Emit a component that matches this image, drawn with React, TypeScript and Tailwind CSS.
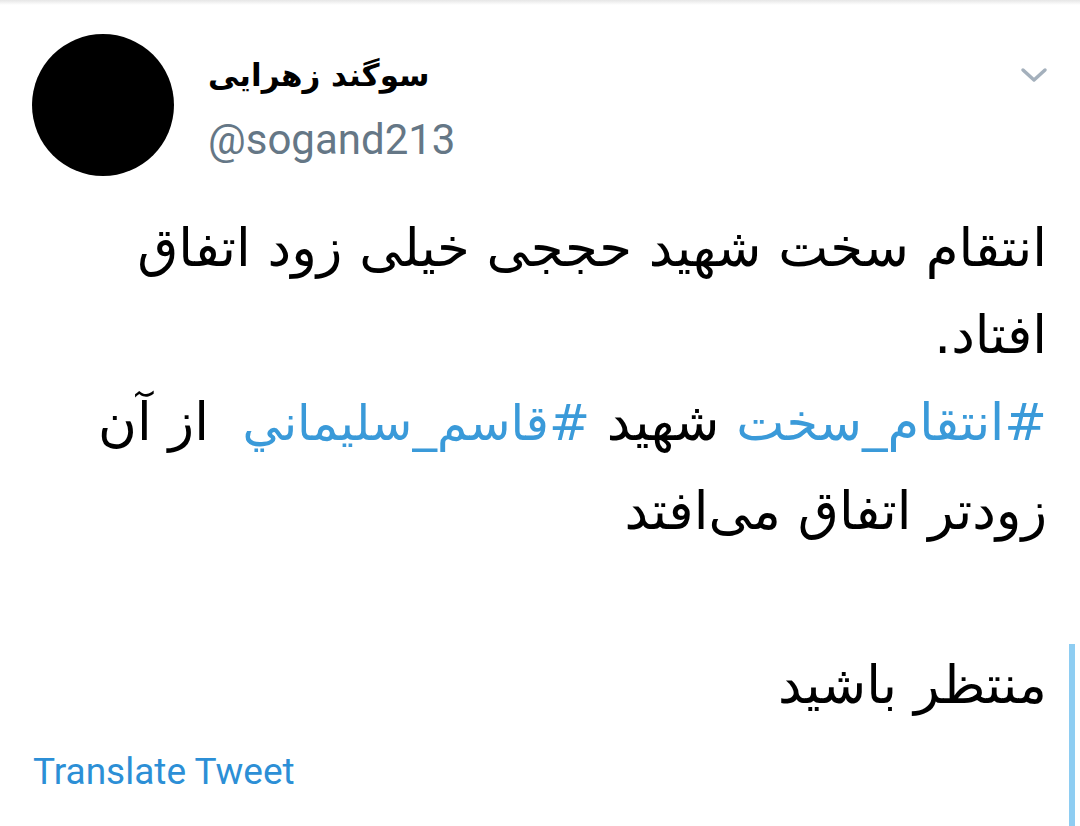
import React from "react";

export default function App() {
  const fa = { fontFamily: '"DejaVu Sans", sans-serif' };
  return (
    <div className="relative w-[1080px] h-[826px] bg-white overflow-hidden">
      <div className="h-[5px] bg-gradient-to-b from-[#e6e6e6] to-white" />
      <div className="flex items-start pl-[32px] pr-[30px] pt-[29px]">
        <div className="w-[142px] h-[142px] rounded-full bg-black shrink-0" />
        <div className="ml-[34px] flex flex-col">
          <div
            dir="rtl"
            className="text-[31px] font-bold leading-[38px] text-black mt-[22px] self-start"
            style={fa}
          >
            سوگند زهرایی
          </div>
          <div
            className="text-[42px] leading-[48px] text-[#657786] mt-[22px]"
            style={{ fontFamily: 'Roboto, "Liberation Sans", sans-serif' }}
          >
            @sogand213
          </div>
        </div>
        <div className="ml-auto mt-[32px] mr-[2px]">
          <svg width="28" height="18" viewBox="0 0 28 18" fill="none">
            <path d="M3 4 L14 14 L25 4" stroke="#a4b0bc" strokeWidth="3.5" strokeLinecap="round" strokeLinejoin="round" />
          </svg>
        </div>
      </div>
      <div
        dir="rtl"
        className="pr-[33px] mt-[28px] text-[53px] leading-[87px] text-black whitespace-nowrap"
        style={fa}
      >
        <p>انتقام سخت شهید حججی خیلی زود اتفاق</p>
        <p>افتاد.</p>
        <p>
          <span className="text-[#3a9ad9] text-[51px]">#انتقام_سخت</span> شهید{" "}
          <span className="text-[#3a9ad9] text-[49px]">#قاسم_سليماني</span>&nbsp; از آن
        </p>
        <p>زودتر اتفاق می‌افتد</p>
        <p>&nbsp;</p>
        <p>منتظر باشید</p>
      </div>
      <div
        className="pl-[33px] mt-[24px] text-[37px] leading-[40px] text-[#2c8fd6]"
        style={{ fontFamily: 'Roboto, "Liberation Sans", sans-serif' }}
      >
        Translate Tweet
      </div>
      <div className="absolute right-[5px] top-[644px] w-[6px] h-[182px] bg-[#8ecdf2]" />
    </div>
  );
}
